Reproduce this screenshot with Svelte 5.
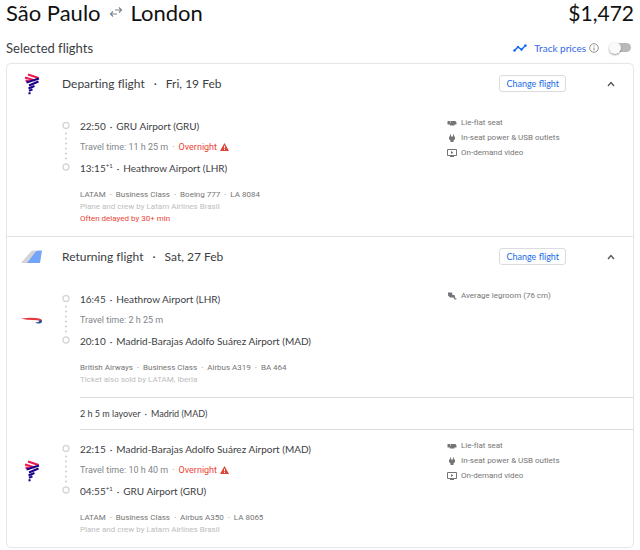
<script>
  const comfort = ['Lie-flat seat', 'In-seat power & USB outlets', 'On-demand video'];

  const trips = [
    {
      title: 'Departing flight',
      date: 'Fri, 19 Feb',
      logo: 'latam',
      legs: [
        {
          from: ['22:50', 'GRU Airport (GRU)'],
          to: ['13:15', 'Heathrow Airport (LHR)'],
          nextDay: true,
          duration: '11 h 25 m',
          info: ['LATAM', 'Business Class', 'Boeing 777', 'LA 8084'],
          note: 'Plane and crew by Latam Airlines Brasil',
          warning: 'Often delayed by 30+ min',
          amenities: comfort
        }
      ]
    },
    {
      title: 'Returning flight',
      date: 'Sat, 27 Feb',
      logo: 'multi',
      legs: [
        {
          logo: 'ba',
          from: ['16:45', 'Heathrow Airport (LHR)'],
          to: ['20:10', 'Madrid-Barajas Adolfo Suárez Airport (MAD)'],
          duration: '2 h 25 m',
          info: ['British Airways', 'Business Class', 'Airbus A319', 'BA 464'],
          note: 'Ticket also sold by LATAM, Iberia',
          amenities: ['Average legroom (76 cm)'],
          layover: ['2 h 5 m layover', 'Madrid (MAD)']
        },
        {
          logo: 'latam',
          from: ['22:15', 'Madrid-Barajas Adolfo Suárez Airport (MAD)'],
          to: ['04:55', 'GRU Airport (GRU)'],
          nextDay: true,
          duration: '10 h 40 m',
          info: ['LATAM', 'Business Class', 'Airbus A350', 'LA 8065'],
          note: 'Plane and crew by Latam Airlines Brasil',
          amenities: comfort
        }
      ]
    }
  ];

  let open = $state([true, true]);
  let tracking = $state(false);
</script>

{#snippet airline(name)}
  {#if name === 'latam'}
    <svg width="20" height="22" viewBox="0 0 20 22" fill="none" stroke-width="2">
      <path d="M6 1.500L16.500 5M3 4.500L13 7.500M3.500 7.500L8 8.500" stroke="#ed1651" />
      <path d="M17 5.500L4.500 9.500M16.500 8.500L7 12.500M12.500 13L6.500 15.500M10.500 16.300L7 17.800M8.500 20L6.500 20.500" stroke="#1b0088" />
    </svg>
  {:else if name === 'ba'}
    <svg width="22" height="8" viewBox="0 0 22 8">
      <path d="M0 1.500Q11 0 18 1.500Q21 2 21 3.500L19 4Q17 3 12 3Q6 3 0 1.500z" fill="#e5383f" />
      <path d="M19 3L21 3.500Q21.500 6 18 6.500Q16 6.800 14 5.500Q18 5.800 19 3z" fill="#23519b" />
    </svg>
  {:else}
    <svg width="22" height="14" viewBox="0 0 22 14">
      <path d="M0 13L9.500 2Q10.500 .5 12 .5H16L10 13z" fill="#d2d4d7" />
      <path d="M6 13L14 2.500Q15.500 .5 17.500 .5H21L19 13z" fill="#74a3fa" />
    </svg>
  {/if}
{/snippet}

{#snippet amenityIcon(name)}
  <svg width="10" height="10" viewBox="0 0 10 10" fill="#757575">
    {#if name.startsWith('Lie')}
      <path d="M.5 3H3V5H.5zM3.500 3H8Q9.500 3 9.500 5H3.500zM.5 5H9.500V6.500H7.500V7.500H3V6.500H.5z" />
    {:else if name.startsWith('In-seat')}
      <path d="M3 1.500H4V3.500H6V1.500H7V3.500H8V6L6.500 7.500V9H3.500V7.500L2 6V3.500H3z" />
    {:else if name.startsWith('On')}
      <path d="M.5 1.500H9.500V7.500H.5z" fill="none" stroke="#757575" />
      <path d="M4 3L6.500 4.500L4 6zM3 8H7V9H3z" />
    {:else}
      <path d="M1 1.500H5L5.500 4H7.500L8.500 7.500H9.500V8.500H7.500L6.500 6.500H3L1 4.500z" />
    {/if}
  </svg>
{/snippet}

<main>
  <header class="title">
    <h1>
      São Paulo
      <svg width="14" height="10" viewBox="0 0 14 10" fill="none" stroke="#80868b" stroke-width="1.200">
        <path d="M6 3H12.500M10 .5L12.500 3L10 5.500M8 7H1.500M4 4.500L1.500 7L4 9.500" />
      </svg>
      London
    </h1>
    <span class="price">$1,472</span>
  </header>

  <div class="toolbar">
    <h2>Selected flights</h2>
    <svg class="trend" width="14" height="8" viewBox="0 0 14 8">
      <path d="M1.500 6.500L5 3L8.500 5.500L12.500 1.500" fill="none" stroke="#1a6bf0" stroke-width="1.500" />
      <g fill="#1a6bf0">
        <circle cx="1.500" cy="6.500" r="1.300" />
        <circle cx="5" cy="3" r="1.200" />
        <circle cx="8.500" cy="5.500" r="1.200" />
        <circle cx="12.500" cy="1.500" r="1.300" />
      </g>
    </svg>
    <label for="track">Track prices</label>
    <svg class="info" width="10" height="10" viewBox="0 0 10 10">
      <circle cx="5" cy="5" r="4.300" fill="none" stroke="#80868b" stroke-width=".9" />
      <path d="M4.500 4.500H5.500V7.500H4.500zM4.500 2.500H5.500V3.500H4.500z" fill="#80868b" />
    </svg>
    <input id="track" type="checkbox" role="switch" bind:checked={tracking} />
  </div>

  <div class="card">
    {#each trips as trip, i}
      <section>
        <div class="trip-head">
          <span class="logo">{@render airline(trip.logo)}</span>
          <h3>{trip.title}<span class="dot wide">·</span>{trip.date}</h3>
          <button class="change">Change flight</button>
          <button class="toggle" aria-label="Toggle details" aria-expanded={open[i]} onclick={() => (open[i] = !open[i])}>
            <svg width="8" height="6" viewBox="0 0 8 6" fill="none" stroke="#50555a" stroke-width="1.300">
              <path d="M1 5L4 1.500L7 5" />
            </svg>
          </button>
        </div>

        {#if open[i]}
          {#each trip.legs as leg, n}
            <div class="leg" class:after={n > 0}>
              <span class="logo side">{#if leg.logo}{@render airline(leg.logo)}{/if}</span>
              <svg class="line" width="8" height="63" viewBox="0 0 8 63">
                <g fill="none" stroke="#d5d7da" stroke-width="1.400">
                  <circle cx="4" cy="9.500" r="3" />
                  <circle cx="4" cy="51" r="3" />
                </g>
                <path d="M4 17.500V43" stroke="#cfd2d5" stroke-width="2.200" stroke-linecap="round" stroke-dasharray="0 5" />
              </svg>
              <div class="route">
                <p class="stop">{leg.from[0]}<span class="dot">·</span>{leg.from[1]}</p>
                <p class="duration">
                  Travel time: {leg.duration}{#if leg.nextDay}<span class="dot">·</span><span class="red">Overnight</span>
                    <svg width="9" height="8" viewBox="0 0 9 8">
                      <path d="M4.500 0L9 8H0z" fill="#db4437" />
                      <path d="M4.500 2.800V5.300M4.500 6V7" stroke="#fff" />
                    </svg>
                  {/if}
                </p>
                <p class="stop">
                  {leg.to[0]}{#if leg.nextDay}<sup>+1</sup>{/if}<span class="dot">·</span>{leg.to[1]}
                </p>
                <div class="details">
                  <p>{#each leg.info as item, k}{#if k}<span class="dot">·</span>{/if}{item}{/each}</p>
                  <p class="note">{leg.note}</p>
                  {#if leg.warning}<p class="red">{leg.warning}</p>{/if}
                </div>
              </div>
              <ul>
                {#each leg.amenities as amenity}
                  <li>{@render amenityIcon(amenity)}{amenity}</li>
                {/each}
              </ul>
            </div>
            {#if leg.layover}
              <p class="layover">{leg.layover[0]}<span class="dot">·</span>{leg.layover[1]}</p>
            {/if}
          {/each}
        {/if}
      </section>
    {/each}
  </div>
</main>

<style>
  :global(body) {
    margin: 0;
    background: #fff;
  }

  main {
    padding: 0 6px;
    font-family: Lato, Roboto, sans-serif;
    font-variant-ligatures: none;
    color: #3c4043;
  }

  h1, h2, h3, p, ul {
    margin: 0;
    padding: 0;
    font-weight: 400;
  }

  button {
    font-family: inherit;
    background: none;
    cursor: pointer;
  }

  .title {
    display: flex;
    justify-content: space-between;
    height: 32px;
    color: #111;
    font-size: 22px;
    line-height: 26px;
  }

  h1 {
    display: flex;
    align-items: center;
    gap: 8px;
    height: 26px;
    font-size: 22px;
  }

  h1 svg {
    margin-bottom: 3px;
  }

  .price {
    font-size: 21px;
    line-height: 25px;
  }

  .toolbar {
    display: flex;
    align-items: center;
    height: 31px;
    padding-right: 3px;
  }

  h2 {
    flex: 1;
    font-size: 13px;
  }

  label {
    margin: 0 3px 0 7px;
    color: #3367e8;
    font-size: 10px;
  }

  input {
    appearance: none;
    display: flex;
    align-items: center;
    width: 20px;
    height: 9px;
    margin: 0 0 0 12px;
    border-radius: 5px;
    background: #b9b9b9;
  }

  input::before {
    content: '';
    width: 12px;
    height: 12px;
    margin-left: -2px;
    flex: none;
    border-radius: 50%;
    background: #fafafa;
    box-shadow: 0 1px 2px rgba(0, 0, 0, 0.4);
  }

  input:checked::before {
    margin-left: 10px;
    background: #1a73e8;
  }

  .card {
    border: 1px solid #e4e6e8;
    border-radius: 5px;
    box-shadow: 0 0 1px #e4e6e8;
  }

  section {
    padding-bottom: 11px;
  }

  section + section {
    border-top: 1px solid #dfe1e3;
  }

  .trip-head {
    display: flex;
    align-items: center;
    height: 39px;
    padding-right: 17px;
  }

  .logo {
    display: flex;
    justify-content: center;
    width: 50px;
    margin-right: 5px;
  }

  h3 {
    flex: 1;
    font-size: 12px;
  }

  .dot {
    margin: 0 4px;
  }

  .dot.wide {
    margin: 0 9px;
  }

  .change {
    height: 17px;
    padding: 0 6px;
    border: 1px solid #dadce0;
    border-radius: 3px;
    color: #1a6be8;
    font-size: 9px;
  }

  .toggle {
    display: flex;
    margin-left: 40px;
    padding: 1px;
    border: 0;
  }

  .leg {
    display: flex;
    align-items: flex-start;
    padding-top: 13px;
  }

  .leg.after {
    padding-top: 9px;
  }

  .side {
    align-items: center;
    height: 63px;
  }

  .line {
    flex: none;
    margin-right: 10px;
  }

  .route {
    flex: 1;
  }

  .stop {
    font-size: 10px;
    line-height: 21px;
  }

  .duration {
    color: #80868b;
    font-family: Roboto, sans-serif;
    font-size: 9px;
    line-height: 21px;
  }

  .duration svg {
    margin-left: 1px;
    vertical-align: -1px;
  }

  sup {
    font-size: 6px;
    line-height: 1px;
  }

  .red {
    color: #ea4335;
  }

  .details {
    margin-top: 10px;
    color: #757575;
    font-family: Roboto, sans-serif;
    font-size: 8px;
    line-height: 12px;
  }

  .note {
    color: #bdbdbd;
  }

  ul {
    width: 186px;
    list-style: none;
    color: #757575;
    font-family: Roboto, sans-serif;
    font-size: 8px;
    line-height: 14px;
  }

  li {
    display: flex;
    align-items: center;
    gap: 4px;
  }

  li + li {
    margin-top: 1px;
  }

  .layover {
    margin: 11px 0 0 73px;
    border: solid #dadce0;
    border-width: 1px 0;
    font-size: 9px;
    line-height: 31px;
  }
</style>
